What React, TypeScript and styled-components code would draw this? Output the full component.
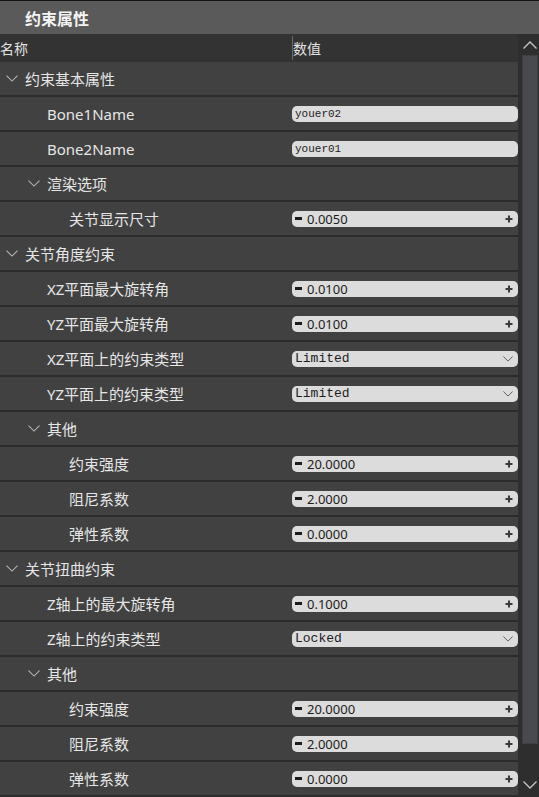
import React from "react";
import styled, { createGlobalStyle } from "styled-components";

const GlobalStyle = createGlobalStyle`
  html, body {
    margin: 0;
    padding: 0;
    background: #2e2e2e;
  }
  * {
    box-sizing: border-box;
  }
`;

type RowKind = "group" | "text" | "num" | "select";

interface Row {
  depth: number;
  label: string;
  kind: RowKind;
  value?: string;
}

const rows: Row[] = [
  { depth: 0, label: "约束基本属性", kind: "group" },
  { depth: 1, label: "Bone1Name", kind: "text", value: "youer02" },
  { depth: 1, label: "Bone2Name", kind: "text", value: "youer01" },
  { depth: 1, label: "渲染选项", kind: "group" },
  { depth: 2, label: "关节显示尺寸", kind: "num", value: "0.0050" },
  { depth: 0, label: "关节角度约束", kind: "group" },
  { depth: 1, label: "XZ平面最大旋转角", kind: "num", value: "0.0100" },
  { depth: 1, label: "YZ平面最大旋转角", kind: "num", value: "0.0100" },
  { depth: 1, label: "XZ平面上的约束类型", kind: "select", value: "Limited" },
  { depth: 1, label: "YZ平面上的约束类型", kind: "select", value: "Limited" },
  { depth: 1, label: "其他", kind: "group" },
  { depth: 2, label: "约束强度", kind: "num", value: "20.0000" },
  { depth: 2, label: "阻尼系数", kind: "num", value: "2.0000" },
  { depth: 2, label: "弹性系数", kind: "num", value: "0.0000" },
  { depth: 0, label: "关节扭曲约束", kind: "group" },
  { depth: 1, label: "Z轴上的最大旋转角", kind: "num", value: "0.1000" },
  { depth: 1, label: "Z轴上的约束类型", kind: "select", value: "Locked" },
  { depth: 1, label: "其他", kind: "group" },
  { depth: 2, label: "约束强度", kind: "num", value: "20.0000" },
  { depth: 2, label: "阻尼系数", kind: "num", value: "2.0000" },
  { depth: 2, label: "弹性系数", kind: "num", value: "0.0000" },
];

const Panel = styled.div`
  width: 539px;
  height: 797px;
  display: flex;
  flex-direction: column;
  overflow: hidden;
  background: #2e2e2e;
  font-family: "Noto Sans", "Noto Sans CJK SC", sans-serif;
`;

const TitleBar = styled.div`
  height: 34px;
  flex: none;
  display: flex;
  align-items: center;
  padding-left: 25px;
  background: #5a5a5a;
  border-top: 1px solid #141414;
  color: #f4f4f4;
  font-size: 16px;
  font-weight: 700;
  font-family: "Noto Sans CJK SC", sans-serif;
`;

const Body = styled.div`
  flex: 1;
  display: flex;
  min-height: 0;
`;

const Grid = styled.div`
  width: 518px;
  display: flex;
  flex-direction: column;
`;

const HeaderRow = styled.div`
  height: 28px;
  flex: none;
  display: flex;
  align-items: center;
  background: #333333;
  color: #e2e2e2;
  font-size: 14px;
  font-family: "Noto Sans CJK SC", sans-serif;
`;

const HeaderCell = styled.div<{ $split?: boolean }>`
  width: ${(p) => (p.$split ? "226px" : "292px")};
  height: 24px;
  display: flex;
  align-items: center;
  border-left: ${(p) => (p.$split ? "1px solid #6a6a6a" : "none")};
`;

const PropRow = styled.div`
  height: 35px;
  flex: none;
  display: flex;
  align-items: center;
  background: #414141;
  border-bottom: 2px solid #2c2c2c;
`;

const LabelCell = styled.div<{ $depth: number }>`
  width: 292px;
  display: flex;
  align-items: center;
  padding-left: ${(p) => p.$depth * 22 + 3}px;
  color: #e6e6e6;
  font-size: 15px;
  white-space: nowrap;
`;

const Toggle = styled.span`
  width: 22px;
  display: flex;
  align-items: center;
  padding-left: 3px;
`;

const ValueCell = styled.div`
  width: 226px;
  display: flex;
  align-items: center;
`;

const Field = styled.div<{ $mono?: boolean; $size?: number }>`
  width: 226px;
  height: 16px;
  display: flex;
  align-items: center;
  padding: 0 5px 0 3px;
  background: #dcdcdc;
  border-radius: 5px;
  color: #1c1c1c;
  font-family: ${(p) =>
    p.$mono ? '"Liberation Mono", "DejaVu Sans Mono", monospace' : '"Noto Sans", sans-serif'};
  font-size: ${(p) => p.$size ?? 13}px;
  line-height: 16px;
`;

const Minus = styled.span`
  width: 7px;
  height: 3px;
  margin: 0 5px 0 0;
  background: #1c1c1c;
`;

const Grow = styled.span`
  flex: 1;
`;

const ScrollTrack = styled.div`
  width: 21px;
  display: flex;
  flex-direction: column;
  align-items: center;
  background: #2e2e2e;
  padding: 4px 0 6px 2px;
`;

const Arrow = styled.div`
  height: 13px;
  display: flex;
  align-items: center;
  justify-content: center;
`;

const Thumb = styled.div`
  width: 16px;
  height: 689px;
  margin-top: 4px;
  background: #484a4f;
  border: 1px solid #3c3e42;
`;

const Chevron = ({ color = "#b4b4b4", w = 12 }: { color?: string; w?: number }) => (
  <svg width={w} height={w * 0.6} viewBox="0 0 12 7">
    <path d="M0.5 0.5 L6 6 L11.5 0.5" fill="none" stroke={color} strokeWidth="1.1" />
  </svg>
);

const Plus = () => (
  <svg width="8" height="8" viewBox="0 0 8 8">
    <path d="M4 0.5 V7.5 M0.5 4 H7.5" stroke="#3a3a3a" strokeWidth="2" />
  </svg>
);

const renderValue = (r: Row) => {
  if (r.kind === "text")
    return (
      <Field $mono $size={11}>
        {r.value}
      </Field>
    );
  if (r.kind === "select")
    return (
      <Field $mono $size={13}>
        {r.value}
        <Grow />
        <Chevron color="#555" w={10} />
      </Field>
    );
  if (r.kind === "num")
    return (
      <Field>
        <Minus />
        {r.value}
        <Grow />
        <Plus />
      </Field>
    );
  return null;
};

const App = () => (
  <>
    <GlobalStyle />
    <Panel>
      <TitleBar>约束属性</TitleBar>
      <Body>
        <Grid>
          <HeaderRow>
            <HeaderCell>名称</HeaderCell>
            <HeaderCell $split>数值</HeaderCell>
          </HeaderRow>
          {rows.map((r, i) => (
            <PropRow key={i}>
              <LabelCell $depth={r.depth}>
                <Toggle>{r.kind === "group" && <Chevron />}</Toggle>
                {r.label}
              </LabelCell>
              <ValueCell>{renderValue(r)}</ValueCell>
            </PropRow>
          ))}
        </Grid>
        <ScrollTrack>
          <Arrow>
            <svg width="14" height="8" viewBox="0 0 14 8">
              <path d="M0.5 7.5 L7 1 L13.5 7.5" fill="none" stroke="#c8c8c8" strokeWidth="1.3" />
            </svg>
          </Arrow>
          <Thumb />
          <Grow />
          <Arrow>
            <svg width="14" height="8" viewBox="0 0 14 8">
              <path d="M0.5 0.5 L7 7 L13.5 0.5" fill="none" stroke="#c8c8c8" strokeWidth="1.3" />
            </svg>
          </Arrow>
        </ScrollTrack>
      </Body>
    </Panel>
  </>
);

export default App;
